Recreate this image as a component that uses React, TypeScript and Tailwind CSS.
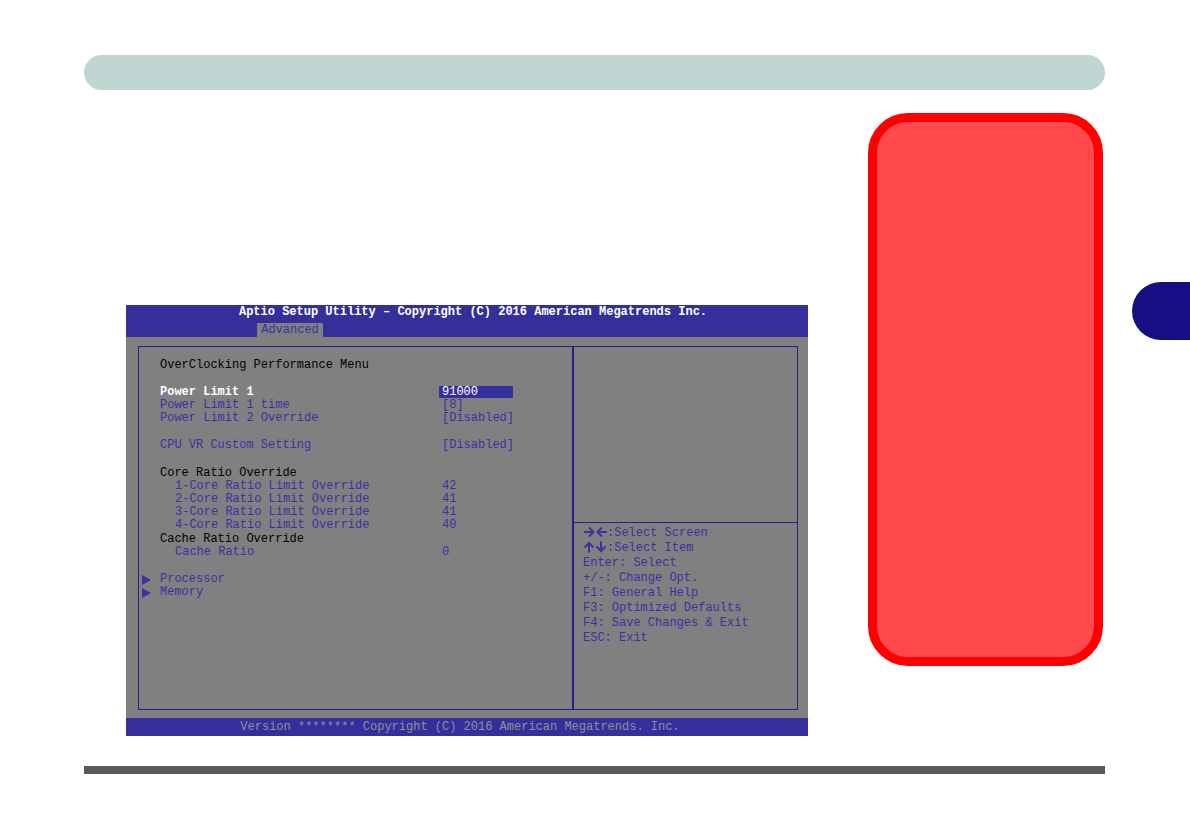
import type { ReactNode } from "react";

type Direction = "right" | "left" | "up" | "down";

const arrowPaths: Record<Direction, string> = {
  right: "M1 6H11M6 1.5L10.5 6L6 10.5",
  left: "M12 6H2M7 1.5L2.5 6L7 10.5",
  up: "M6 11.5V2M1.5 6.5L6 2L10.5 6.5",
  down: "M6 0.5V10M1.5 5.5L6 10L10.5 5.5",
};

function Arrow({ direction }: { direction: Direction }) {
  return (
    <svg className="size-3 shrink-0" viewBox="0 0 12 12" fill="none" stroke="currentColor" strokeWidth="2" aria-hidden="true">
      <path d={arrowPaths[direction]} />
    </svg>
  );
}

function Heading({ children }: { children: ReactNode }) {
  return <h2 className="h-[14px] leading-[14px] text-black">{children}</h2>;
}

function Row({ id, label, indent = false, active = false, children }: { id: string; label: string; indent?: boolean; active?: boolean; children: ReactNode }) {
  return (
    <div className="flex h-[13px] items-start leading-[13px]">
      <label htmlFor={id} className={`w-[279px] shrink-0 ${indent ? "pl-[15px]" : ""} ${active ? "font-bold text-white" : ""}`}>
        {label}
      </label>
      {children}
    </div>
  );
}

function Choice({ id, value }: { id: string; value: string }) {
  return (
    <select id={id} defaultValue={value} className="h-[13px] w-[80px] appearance-none bg-transparent pl-[3px] leading-[13px] outline-none">
      <option value={value}>[{value}]</option>
    </select>
  );
}

function NumberField({ id, value, active = false }: { id: string; value: string; active?: boolean }) {
  return (
    <input
      id={id}
      defaultValue={value}
      className={`h-3 w-[74px] pl-[3px] leading-3 outline-none ${active ? "bg-[#352f9b] text-white" : "bg-transparent"}`}
    />
  );
}

function Submenu({ label }: { label: string }) {
  return (
    <button type="button" className="-ml-[18px] flex h-[13px] items-center gap-[9px] leading-[13px]">
      <svg className="h-[10px] w-[9px]" viewBox="0 0 9 10" fill="currentColor" aria-hidden="true">
        <path d="M0 0L9 5L0 10Z" />
      </svg>
      {label}
    </button>
  );
}

const coreRatios = ["42", "41", "41", "40"];

const keys = [
  "Enter: Select",
  "+/-: Change Opt.",
  "F1: General Help",
  "F3: Optimized Defaults",
  "F4: Save Changes & Exit",
  "ESC: Exit",
];

function SetupScreen() {
  return (
    <section className="bg-[#808080] font-['Liberation_Mono',monospace] text-[12px] text-[#3b31a3]">
      <header className="flex h-8 flex-col justify-between bg-[#352f9b]">
        <h1 className="pl-3 text-center leading-[14px] font-bold whitespace-nowrap text-white">
          Aptio Setup Utility – Copyright (C) 2016 American Megatrends Inc.
        </h1>
        <nav className="flex pl-[131px]">
          <button type="button" className="h-[14px] w-[66px] bg-[#808080] leading-[14px]">
            Advanced
          </button>
        </nav>
      </header>

      <main className="pt-[9px] pr-[10px] pb-2 pl-3">
        <div className="flex border border-[#282089]">
          <form className="flex flex-1 flex-col gap-[14px] pt-[11px] pb-[110px] pl-[21px]">
            <Heading>OverClocking Performance Menu</Heading>
            <div>
              <Row id="pl1" label="Power Limit 1" active>
                <NumberField id="pl1" value="91000" active />
              </Row>
              <Row id="pl1-time" label="Power Limit 1 time">
                <Choice id="pl1-time" value="8" />
              </Row>
              <Row id="pl2" label="Power Limit 2 Override">
                <Choice id="pl2" value="Disabled" />
              </Row>
            </div>
            <Row id="cpu-vr" label="CPU VR Custom Setting">
              <Choice id="cpu-vr" value="Disabled" />
            </Row>
            <div>
              <Heading>Core Ratio Override</Heading>
              {coreRatios.map((ratio, i) => (
                <Row key={i} id={`core-${i + 1}`} label={`${i + 1}-Core Ratio Limit Override`} indent>
                  <NumberField id={`core-${i + 1}`} value={ratio} />
                </Row>
              ))}
              <Heading>Cache Ratio Override</Heading>
              <Row id="cache" label="Cache Ratio" indent>
                <NumberField id="cache" value="0" />
              </Row>
            </div>
            <div>
              <Submenu label="Processor" />
              <Submenu label="Memory" />
            </div>
          </form>
          <aside className="flex w-[225px] flex-col border-l-2 border-[#282089]">
            <div className="h-[176px] border-b border-[#282089]" />
            <ul className="pt-[3px] pl-[9px] leading-[15px] whitespace-nowrap">
              <li className="flex items-start">
                <Arrow direction="right" />
                <Arrow direction="left" />
                :Select Screen
              </li>
              <li className="flex items-start">
                <Arrow direction="up" />
                <Arrow direction="down" />
                :Select Item
              </li>
              {keys.map((key) => (
                <li key={key}>{key}</li>
              ))}
            </ul>
          </aside>
        </div>
      </main>

      <footer className="h-[18px] bg-[#352f9b] pr-[14px] text-center leading-[18px] whitespace-nowrap text-[#8f9199]">
        Version ******** Copyright (C) 2016 American Megatrends. Inc.
      </footer>
    </section>
  );
}

export default function App() {
  return (
    <div className="flex min-h-screen bg-white">
      <div className="flex-1 pt-[55px] pr-[27px] pl-[84px]">
        <div className="h-[35px] rounded-full bg-[#c0d6d2]" />
        <div className="mt-[23px] flex items-start gap-[60px] pr-[2px] pl-[42px]">
          <div className="flex-1 pt-48">
            <SetupScreen />
          </div>
          <div className="h-[553px] w-[235px] rounded-[40px] border-[9px] border-[#ff0000] bg-[#ff494c]" />
        </div>
        <hr className="mt-[30px] h-2 border-0 bg-[#595959]" />
      </div>
      <div className="w-[58px] pt-[282px]">
        <div className="h-[58px] rounded-l-[29px] bg-[#160f84]" />
      </div>
    </div>
  );
}
